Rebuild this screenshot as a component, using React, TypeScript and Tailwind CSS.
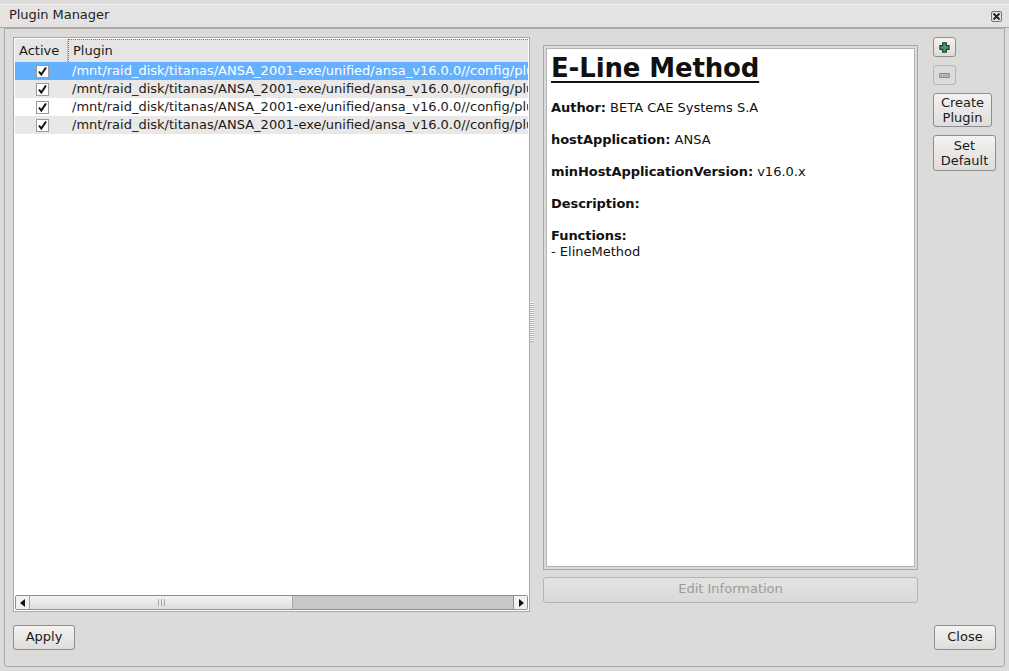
const rowPath = "/mnt/raid_disk/titanas/ANSA_2001-exe/unified/ansa_v16.0.0//config/plugins/eline_method";

function Check() {
  return (
    <span className="flex h-[13px] w-[13px] items-center justify-center border border-[#9a9a9a] bg-white">
      <svg width="11" height="11" viewBox="0 0 11 11">
        <path d="M2 5.5 L4.3 8.5 L9 1.5" fill="none" stroke="#111" strokeWidth="2" />
      </svg>
    </span>
  );
}

function Row({ selected, alt }: { selected?: boolean; alt?: boolean }) {
  const bg = selected ? "bg-[#64b1ff] text-white" : alt ? "bg-[#e9e8e7] text-[#1a1a1a]" : "bg-white text-[#1a1a1a]";
  return (
    <div className={`flex h-[18px] items-center overflow-hidden whitespace-nowrap ${bg}`}>
      <div className="flex w-[54px] shrink-0 justify-center">
        <Check />
      </div>
      <span className="pl-[3px]">{rowPath}</span>
    </div>
  );
}

function Btn({ children, className }: { children: React.ReactNode; className: string }) {
  return (
    <button className={`flex items-center justify-center rounded-[3px] border border-[#8e8e8e] bg-gradient-to-b from-[#f4f3f2] to-[#dedddc] text-center leading-[15px] text-[#1a1a1a] ${className}`}>
      {children}
    </button>
  );
}

function PluginList() {
  return (
    <div className="flex h-[575px] w-[517px] shrink-0 flex-col border border-[#a8a8a8] bg-white p-[1px]">
      <div className="flex h-[23px] shrink-0 bg-[#e6e5e4] text-[#1a1a1a]">
        <div className="flex w-[53px] items-center border-r border-[#c4c4c4] pl-[4px]">Active</div>
        <div className="flex flex-1 items-center border-l border-t border-dotted border-[#777] pb-[1px] pl-[4px]">Plugin</div>
      </div>
      <Row selected />
      <Row alt />
      <Row />
      <Row alt />
      <div className="flex-1" />
      <div className="flex h-[15px] shrink-0 items-stretch rounded-[2px] border border-[#8e8e8e] bg-[#c9c8c7]">
        <div className="flex w-[14px] items-center justify-center border-r border-[#a8a8a8] bg-[#f2f1f0]">
          <svg width="6" height="8" viewBox="0 0 6 8"><path d="M5 0 L0 4 L5 8 Z" fill="#111" /></svg>
        </div>
        <div className="flex w-[263px] items-center justify-center gap-[2px] border-r border-[#a8a8a8] bg-gradient-to-b from-[#f4f3f2] to-[#dedddc]">
          <span className="h-[7px] w-px bg-[#aaa]" />
          <span className="h-[7px] w-px bg-[#aaa]" />
          <span className="h-[7px] w-px bg-[#aaa]" />
        </div>
        <div className="flex-1" />
        <div className="flex w-[14px] items-center justify-center border-l border-[#8e8e8e] bg-[#f2f1f0]">
          <svg width="6" height="8" viewBox="0 0 6 8"><path d="M1 0 L6 4 L1 8 Z" fill="#111" /></svg>
        </div>
      </div>
    </div>
  );
}

function Info() {
  return (
    <div className="flex w-[375px] shrink-0 flex-col gap-[7px] pt-[8px]">
      <div className="h-[525px] border border-[#a8a8a8] p-[2px]">
        <div className="h-full border border-[#b4b4b4] bg-white pl-[4px] pt-[1px] leading-[16px] text-[#111]">
          <h1 className="mb-[16px] mt-[3px] text-[26px] font-bold leading-[31px] tracking-[-0.15px] underline decoration-2 underline-offset-[4px]">E-Line Method</h1>
          <p className="mb-[16px]"><b className="tracking-[-0.05px]">Author:</b> BETA CAE Systems S.A</p>
          <p className="mb-[16px]"><b className="tracking-[-0.05px]">hostApplication:</b> ANSA</p>
          <p className="mb-[16px]"><b className="tracking-[-0.08px]">minHostApplicationVersion:</b> v16.0.x</p>
          <p className="mb-[16px] font-bold tracking-[-0.05px]">Description:</p>
          <p className="font-bold tracking-[-0.05px]">Functions:</p>
          <p>- ElineMethod</p>
        </div>
      </div>
      <button className="h-[26px] rounded-[3px] border border-[#b4b4b4] bg-gradient-to-b from-[#e4e3e2] to-[#dad9d8] pb-[2px] text-[#9b9b9b]">
        Edit Information
      </button>
    </div>
  );
}

function SideButtons() {
  return (
    <div className="flex flex-col items-start gap-[8px]">
      <Btn className="h-[20px] w-[23px]">
        <svg width="11" height="11" viewBox="0 0 12 12" className="mr-[1px]">
          <path d="M4 1 H8 V4 H11 V8 H8 V11 H4 V8 H1 V4 H4 Z" fill="#4f9a64" stroke="#17452a" strokeWidth="1.3" />
        </svg>
      </Btn>
      <button className="flex h-[20px] w-[23px] items-center justify-center rounded-[3px] border border-[#b4b4b4] bg-[#dcdbda]">
        <span className="h-[5px] w-[11px] rounded-[1px] border border-[#8a8a8a] bg-[#b4b4b4]" />
      </button>
      <Btn className="h-[34px] w-[59px]">Create<br />Plugin</Btn>
      <Btn className="h-[36px] w-[63px]">Set<br />Default</Btn>
    </div>
  );
}

export default function App() {
  return (
    <div className="flex h-[671px] w-[1009px] flex-col overflow-hidden bg-[#dcdbda] pt-[4px] font-['DejaVu_Sans',sans-serif] text-[13px]">
      <div className="flex h-[24px] shrink-0 items-center justify-between border-y border-y-[#a9a9a9] border-t-[#f2f2f2] bg-[#e4e3e2] pl-[9px] pr-[7px] text-[#222]">
        <span className="pb-[2px] tracking-[-0.05px]">Plugin Manager</span>
        <span className="flex h-[11px] w-[11px] items-center justify-center rounded-[2px] border border-[#777]">
          <svg width="9" height="9" viewBox="0 0 9 9">
            <path d="M1.5 1.5 L7.5 7.5 M7.5 1.5 L1.5 7.5" stroke="#222" strokeWidth="1.8" />
          </svg>
        </span>
      </div>
      <div className="mx-[4px] flex h-[639px] flex-col rounded-b-[3px] border border-[#a9a9a9] px-[8px] pt-[8px]">
        <div className="flex">
          <PluginList />
          <div className="flex w-[13px] shrink-0 items-center">
            <div className="mb-[6px] h-[40px] w-[4px] bg-[repeating-linear-gradient(to_bottom,#f4f4f4_0,#f4f4f4_1px,#b5b5b5_1px,#b5b5b5_2px)]" />
          </div>
          <Info />
          <div className="ml-[15px]">
            <SideButtons />
          </div>
        </div>
        <div className="mt-[13px] flex justify-between">
          <Btn className="h-[25px] w-[62px] pb-[2px]">Apply</Btn>
          <Btn className="h-[25px] w-[62px] pb-[2px]">Close</Btn>
        </div>
      </div>
    </div>
  );
}
